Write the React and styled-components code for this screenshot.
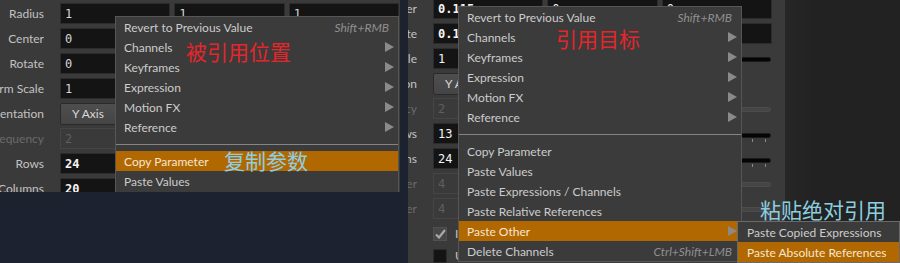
import styled, { createGlobalStyle } from "styled-components";

const GlobalStyle = createGlobalStyle`
  html, body {
    margin: 0;
    padding: 0;
    background: #1d2230;
  }
  body {
    font-family: Lato, "Noto Sans", sans-serif;
  }
`;

const Stage = styled.div`
  position: relative;
  display: flex;
  align-items: flex-start;
  gap: 8px;
  width: 900px;
  height: 263px;
  overflow: hidden;
  background: linear-gradient(165deg, #1c212d 0%, #1e2332 100%);
`;

const Panel = styled.div`
  position: relative;
  flex: none;
  box-sizing: border-box;
  width: ${(p) => p.$width}px;
  height: ${(p) => p.$height}px;
  padding-right: ${(p) => p.$right}px;
  background: #3a3a3a;
  overflow: hidden;
`;

const Rows = styled.div`
  display: flex;
  flex-direction: column;
  gap: 4px;
  margin-top: ${(p) => p.$top}px;
`;

const Row = styled.div`
  display: flex;
  align-items: ${(p) => (p.$check ? "flex-end" : "center")};
  height: ${(p) => p.$h || 21}px;
  flex: none;
`;

const Label = styled.div`
  flex: none;
  width: ${(p) => p.$w}px;
  margin-right: 16px;
  display: flex;
  justify-content: flex-end;
  overflow: hidden;
  white-space: nowrap;
  font-size: 12px;
  color: ${(p) => (p.$disabled ? "#6a6a6a" : "#c2c2c2")};
  span {
    flex: none;
  }
`;

const Fields = styled.div`
  display: flex;
  gap: 4px;
  width: 339px;
  height: 100%;
  align-items: center;
`;

const Field = styled.div`
  box-sizing: border-box;
  flex: ${(p) => (p.$w ? "none" : "1")};
  width: ${(p) => (p.$w ? `${p.$w}px` : "auto")};
  height: 21px;
  padding-left: 4px;
  display: flex;
  align-items: center;
  background: ${(p) => (p.$disabled ? "#3a3a3a" : "#141414")};
  border: 1px solid ${(p) => (p.$disabled ? "#454545" : "#2c2c2c")};
  font-family: "DejaVu Sans Mono", monospace;
  font-size: 12px;
  font-weight: ${(p) => (p.$bold ? 700 : 400)};
  color: ${(p) => (p.$disabled ? "#5e5e5e" : p.$bright ? "#f4f4f4" : "#d6d6d6")};
`;

const Button = styled.div`
  box-sizing: border-box;
  width: 56px;
  height: 22px;
  display: flex;
  align-items: center;
  justify-content: center;
  background: linear-gradient(#4e4e4e, #454545);
  border: 1px solid #2a2a2a;
  border-radius: 2px;
  font-size: 12px;
  color: #d8d8d8;
`;

const Slider = styled.div`
  flex: 1;
  height: 21px;
  margin-left: 8px;
  margin-right: 1px;
  display: flex;
  flex-direction: column;
`;

const Track = styled.div`
  height: 5px;
  margin-top: ${(p) => (p.$ticks ? 10 : 9)}px;
  border-radius: 3px;
  background: ${(p) => (p.$disabled ? "#454545" : "#050505")};
  border: 1px solid ${(p) => (p.$disabled ? "#4c4c4c" : "#1a1a1a")};
  box-sizing: border-box;
`;

const Ticks = styled.div`
  height: 3px;
  margin-top: 1px;
  background: repeating-linear-gradient(
    to left,
    transparent 0 5px,
    #8a8a8a 5px 6px,
    transparent 6px 13px
  );
`;

const Check = styled.div`
  flex: none;
  box-sizing: border-box;
  width: 14px;
  height: 14px;
  display: flex;
  align-items: center;
  justify-content: center;
  background: ${(p) => (p.$on ? "#474747" : "#141414")};
  border: 1px solid ${(p) => (p.$on ? "#505050" : "#2c2c2c")};
`;

const CheckText = styled.span`
  margin-left: 8px;
  font-size: 12px;
  color: #c2c2c2;
  line-height: 14px;
`;

const Menu = styled.div`
  position: absolute;
  left: ${(p) => p.$x}px;
  top: ${(p) => p.$y}px;
  width: ${(p) => p.$w}px;
  box-sizing: border-box;
  background: #3b3b3b;
  border: 1px solid ${(p) => (p.$sub ? "#6a6a6a" : "#565656")};
  font-size: 12px;
  color: #cccccc;
  z-index: ${(p) => (p.$sub ? 3 : 2)};
`;

const Item = styled.div`
  height: 20px;
  display: flex;
  align-items: center;
  padding: 0 4px 0 ${(p) => (p.$sub ? 9 : 8)}px;
  white-space: nowrap;
  background: ${(p) => (p.$active ? "#b26800" : "transparent")};
  color: ${(p) => (p.$active ? "#f6e6d2" : "#cccccc")};
`;

const Shortcut = styled.span`
  margin-left: auto;
  margin-right: 5px;
  font-style: italic;
  color: #8f8f8f;
`;

const Arrow = styled.span`
  margin-left: auto;
  width: 0;
  height: 0;
  border-left: 9px solid #8a8a8a;
  border-top: 5px solid transparent;
  border-bottom: 5px solid transparent;
`;

const Separator = styled.div`
  height: 14px;
  display: flex;
  align-items: center;
  &::after {
    content: "";
    flex: 1;
    height: 1px;
    background: #858585;
  }
`;

const Note = styled.div`
  position: absolute;
  left: ${(p) => p.$x}px;
  top: ${(p) => p.$y}px;
  font-family: "Noto Sans CJK SC", sans-serif;
  font-size: 21px;
  line-height: 1;
  white-space: nowrap;
  color: ${(p) => (p.$blue ? "#8dcfe0" : "#e6252b")};
  z-index: 4;
`;

const DarkArea = styled.div`
  flex: 1;
  align-self: stretch;
  margin-left: -8px;
  background: linear-gradient(90deg, #262626, #222222 30px);
`;

const CheckMark = () => (
  <svg width="11" height="10" viewBox="0 0 11 10">
    <path d="M1 5.5 L4 8.5 L10 1" fill="none" stroke="#a8a8a8" strokeWidth="2.2" />
  </svg>
);

const ParamRow = ({ label, w, disabled, children }) => (
  <Row>
    <Label $w={w} $disabled={disabled}>
      <span>{label}</span>
    </Label>
    <Fields>{children}</Fields>
  </Row>
);

const Vec3 = ({ label, w, values, bold }) => (
  <ParamRow label={label} w={w}>
    {values.map((v, i) => (
      <Field key={i} $bold={bold} $bright={bold}>
        {v}
      </Field>
    ))}
  </ParamRow>
);

const SliderRow = ({ label, w, value, disabled, bold, bright, ticks }) => (
  <ParamRow label={label} w={w} disabled={disabled}>
    <Field $w={72} $disabled={disabled} $bold={bold} $bright={bright}>
      {value}
    </Field>
    <Slider>
      <Track $disabled={disabled} $ticks={ticks} />
      {ticks && <Ticks />}
    </Slider>
  </ParamRow>
);

const CheckRow = ({ w, on, text }) => (
  <Row $h={18} $check>
    <Label $w={w} />
    <Check $on={on}>{on && <CheckMark />}</Check>
    <CheckText>{text}</CheckText>
  </Row>
);

const MenuItems = ({ items, sub }) =>
  items.map((it, i) =>
    it === "-" ? (
      <Separator key={i} />
    ) : (
      <Item key={i} $active={it.active} $sub={sub}>
        {it.text}
        {it.key && <Shortcut>{it.key}</Shortcut>}
        {it.arrow && <Arrow />}
      </Item>
    )
  );

const mainItems = [
  { text: "Revert to Previous Value", key: "Shift+RMB" },
  { text: "Channels", arrow: true },
  { text: "Keyframes", arrow: true },
  { text: "Expression", arrow: true },
  { text: "Motion FX", arrow: true },
  { text: "Reference", arrow: true },
  "-",
];

const leftItems = [
  ...mainItems,
  { text: "Copy Parameter", active: true },
  { text: "Paste Values" },
  { text: "Paste Expressions / Channels" },
];

const rightItems = [
  ...mainItems,
  { text: "Copy Parameter" },
  { text: "Paste Values" },
  { text: "Paste Expressions / Channels" },
  { text: "Paste Relative References" },
  { text: "Paste Other", active: true, arrow: true },
  { text: "Delete Channels", key: "Ctrl+Shift+LMB" },
];

const subItems = [
  { text: "Paste Copied Expressions" },
  { text: "Paste Absolute References", active: true },
];

export default function App() {
  return (
    <>
      <GlobalStyle />
      <Stage>
        <Panel $width={400} $height={192} $right={1}>
          <Rows $top={3}>
            <Vec3 label="Radius" w={44} values={["1", "1", "1"]} />
            <Vec3 label="Center" w={44} values={["0", "0", "0"]} />
            <Vec3 label="Rotate" w={44} values={["0", "0", "0"]} />
            <SliderRow label="Uniform Scale" w={44} value="1" />
            <ParamRow label="Orientation" w={44}>
              <Button>Y Axis</Button>
            </ParamRow>
            <SliderRow label="Frequency" w={44} value="2" disabled />
            <SliderRow label="Rows" w={44} value="24" bold bright ticks />
            <SliderRow label="Columns" w={44} value="20" bold bright ticks />
          </Rows>
          <Menu $x={115} $y={16} $w={284}>
            <MenuItems items={leftItems} />
          </Menu>
        </Panel>

        <Panel $width={377} $height={263} $right={13}>
          <Rows $top={-2}>
            <ParamRow label="Center" w={9}>
              <Field $bold $bright>0.115</Field>
              <Field $bright>0</Field>
              <Field $bright>0</Field>
            </ParamRow>
            <ParamRow label="Rotate" w={9}>
              <Field $bold $bright>0.125</Field>
              <Field $bright>0</Field>
              <Field $bright>0</Field>
            </ParamRow>
            <SliderRow label="Uniform Scale" w={9} value="1" bright />
            <ParamRow label="Orientation" w={9}>
              <Button>Y Axis</Button>
            </ParamRow>
            <SliderRow label="Frequency" w={9} value="2" disabled />
            <SliderRow label="Rows" w={9} value="13" bright ticks />
            <SliderRow label="Columns" w={9} value="24" bright ticks />
            <SliderRow label="Inner Layer" w={9} value="4" disabled />
            <SliderRow label="Outer Layer" w={9} value="4" disabled />
            <CheckRow w={9} on text="Invert" />
            <CheckRow w={9} text="Use Offset" />
          </Rows>
        </Panel>

        <DarkArea />

        <Menu $x={458} $y={6} $w={284}>
          <MenuItems items={rightItems} />
        </Menu>
        <Menu $x={737} $y={221} $w={163} $sub>
          <MenuItems items={subItems} sub />
        </Menu>

        <Note $x={186} $y={41}>被引用位置</Note>
        <Note $x={224} $y={150} $blue>复制参数</Note>
        <Note $x={556} $y={28}>引用目标</Note>
        <Note $x={760} $y={199} $blue>粘贴绝对引用</Note>
      </Stage>
    </>
  );
}
